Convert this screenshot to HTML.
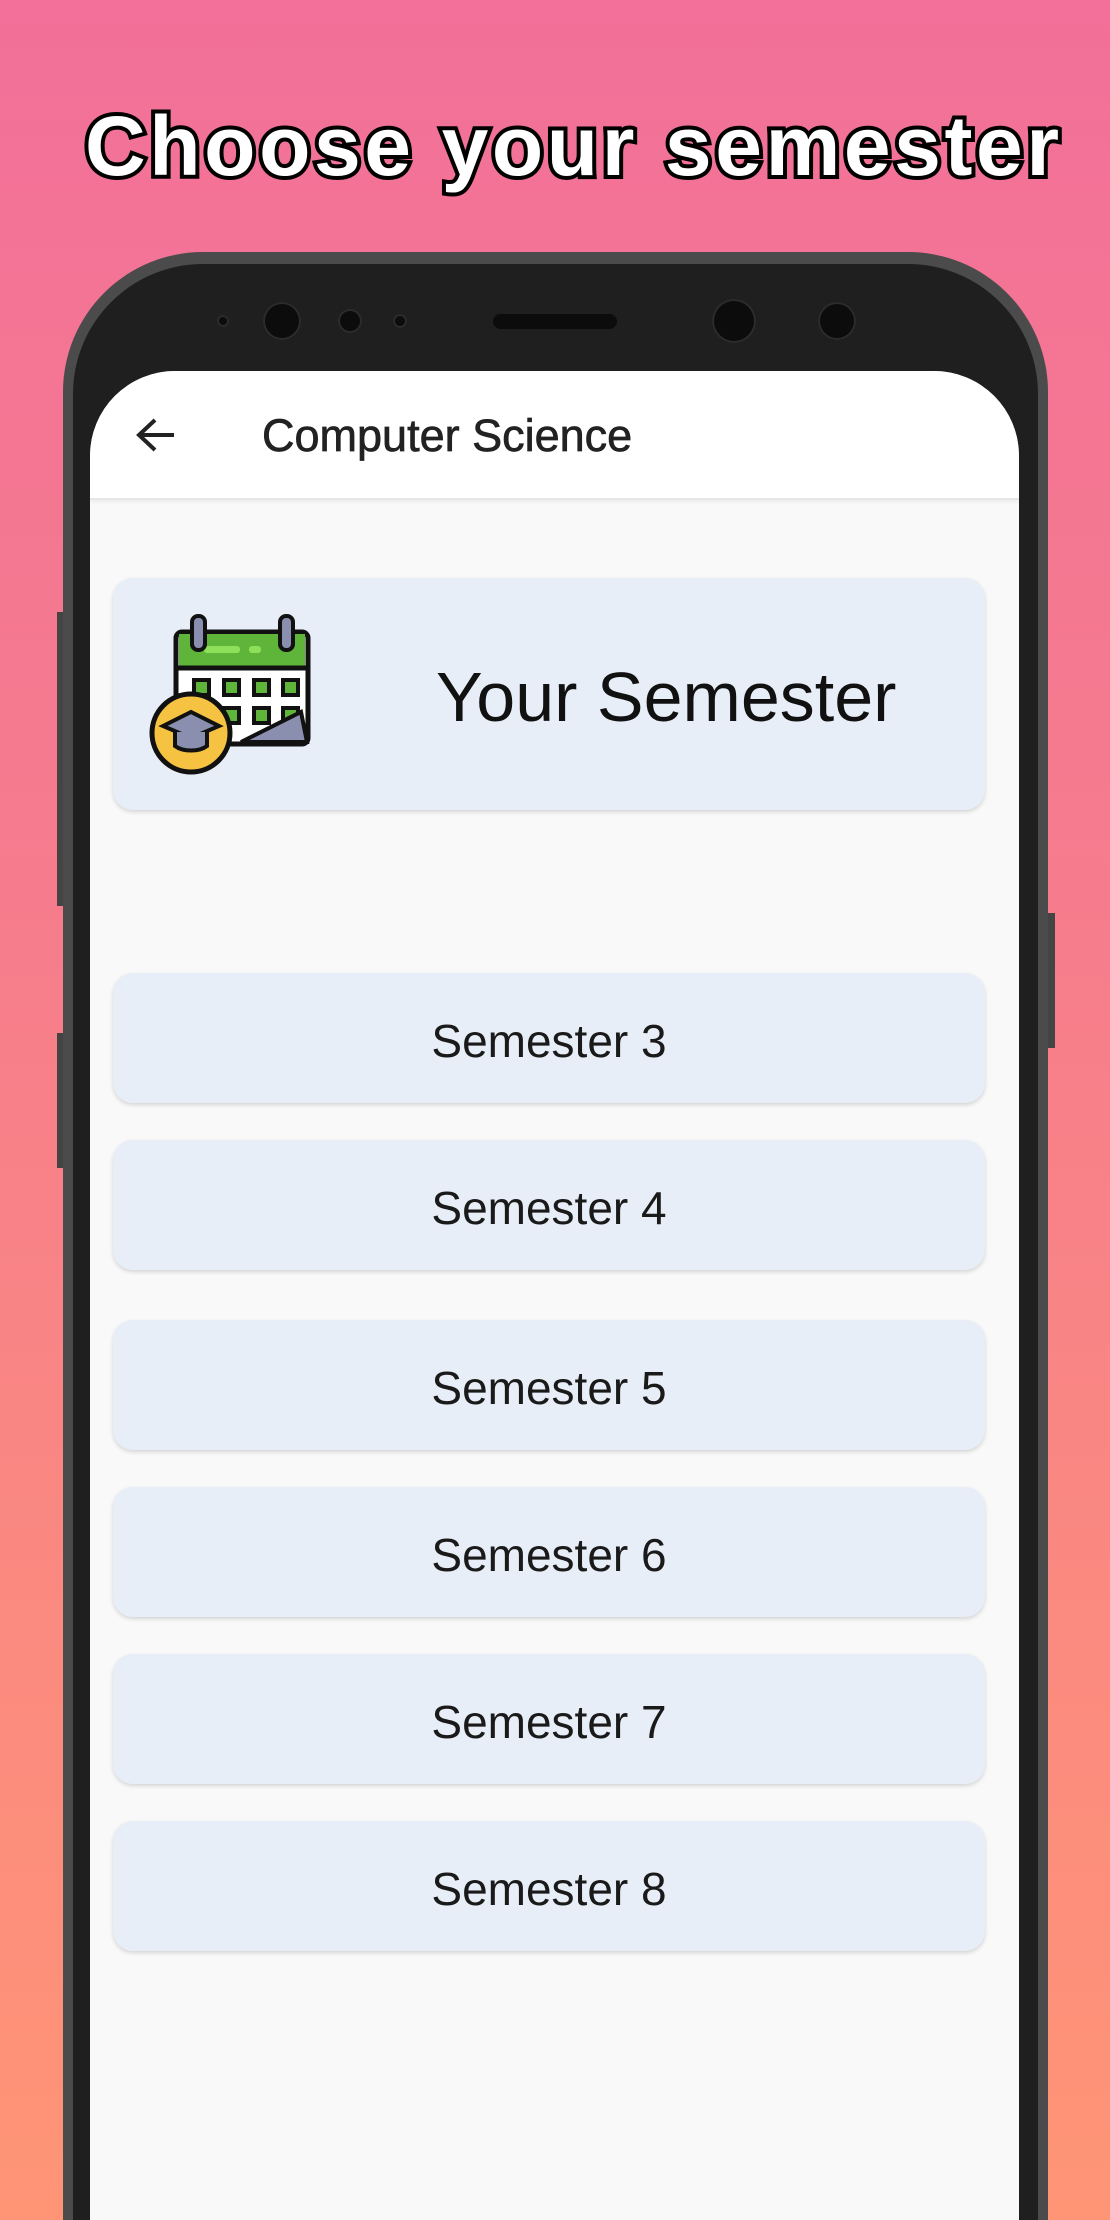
<!DOCTYPE html>
<html><head><meta charset="utf-8"><style>
*{margin:0;padding:0;box-sizing:border-box}
html,body{width:1110px;height:2220px;overflow:hidden}
body{background:linear-gradient(180deg,#f27099 0%,#f67c8d 40%,#ff9575 100%);position:relative;font-family:"Liberation Sans",sans-serif}
.title{position:absolute;left:85px;top:104px;font-size:84px;font-weight:bold;color:#fff;-webkit-text-stroke:8px #000;paint-order:stroke fill;letter-spacing:3.6px;white-space:nowrap;line-height:1}
.phone{position:absolute;left:63px;top:252px;width:985px;height:1968px;background:#4b4b4b;border-radius:140px 140px 0 0}
.bezel{position:absolute;left:10px;top:12px;right:10px;bottom:0;background:#1f1f1f;border-radius:130px 130px 0 0}
.sb{position:absolute;background:#444}
.screen{position:absolute;left:90px;top:371px;width:929px;height:1849px;background:#f9f9f9;border-radius:85px 85px 0 0;overflow:hidden}
.appbar{height:129px;background:#fff;border-bottom:2px solid #e6e6e6;box-shadow:0 2px 4px rgba(0,0,0,.06);position:relative}
.appbar .t{position:absolute;left:172px;top:39px;font-size:45px;color:#222;-webkit-text-stroke:0.7px #222}
.card{position:absolute;left:23px;width:872px;background:#e8eef7;border-radius:20px;box-shadow:0 2px 4px rgba(0,0,0,.15)}
.btn{height:130px;display:flex;align-items:center;justify-content:center;font-size:46px;color:#1a1a1a;padding-top:6px}
.dot{position:absolute;border-radius:50%;background:#0c0c0c;box-shadow:inset 0 0 0 2px #2c2c2c}
</style></head><body>
<div class="title">Choose your semester</div>
<div class="sb" style="left:57px;top:612px;width:7px;height:294px"></div>
<div class="sb" style="left:57px;top:1033px;width:7px;height:135px"></div>
<div class="sb" style="left:1047px;top:913px;width:8px;height:135px"></div>
<div class="phone"><div class="bezel"></div></div>
<div class="dot" style="left:217px;top:315px;width:12px;height:12px"></div>
<div class="dot" style="left:263px;top:302px;width:38px;height:38px"></div>
<div class="dot" style="left:338px;top:309px;width:24px;height:24px"></div>
<div class="dot" style="left:393px;top:314px;width:14px;height:14px"></div>
<div style="position:absolute;left:493px;top:314px;width:124px;height:15px;border-radius:8px;background:#0c0c0c"></div>
<div class="dot" style="left:712px;top:299px;width:44px;height:44px"></div>
<div class="dot" style="left:818px;top:302px;width:38px;height:38px"></div>
<div class="screen">
 <div class="appbar">
  <svg style="position:absolute;left:44px;top:44px" width="44" height="40" viewBox="0 0 44 40"><path d="M40 20H6M21 5L5 20l16 15" fill="none" stroke="#222" stroke-width="4"/></svg>
  <div class="t">Computer Science</div>
 </div>
 <div class="card" style="top:207px;height:232px">
  <svg style="position:absolute;left:36px;top:36px" width="166" height="162" viewBox="0 0 166 162">
   <rect x="27" y="18" width="132" height="112" rx="6" fill="#fff" stroke="#111" stroke-width="5"/>
   <path d="M30 20h126v34H30z" fill="#5fb43a"/>
   <rect x="55" y="32" width="36" height="7" rx="3" fill="#8ee05a"/><rect x="100" y="32" width="12" height="7" rx="3" fill="#8ee05a"/>
   <path d="M29 54h128" stroke="#111" stroke-width="5"/>
   <rect x="43" y="2" width="13" height="34" rx="6" fill="#8a8fb0" stroke="#111" stroke-width="4"/>
   <rect x="131" y="2" width="13" height="34" rx="6" fill="#8a8fb0" stroke="#111" stroke-width="4"/>
   <g fill="#5fb43a" stroke="#111" stroke-width="4"><rect x="45" y="66" width="15" height="15"/><rect x="75" y="66" width="15" height="15"/><rect x="105" y="66" width="15" height="15"/><rect x="134" y="66" width="15" height="15"/><rect x="75" y="94" width="15" height="15"/><rect x="105" y="94" width="15" height="15"/><rect x="134" y="94" width="15" height="15"/></g>
   <path d="M92 128l60-30 6 30z" fill="#8a8fb0" stroke="#111" stroke-width="4"/>
   <circle cx="42" cy="119" r="39" fill="#f5c242" stroke="#111" stroke-width="5"/>
   <path d="M14 112l28-14 28 14-28 12z" fill="#8a8fb0" stroke="#111" stroke-width="4"/>
   <path d="M26 118v14c8 6 24 6 32 0v-14" fill="#8a8fb0" stroke="#111" stroke-width="4"/>
  </svg>
  <div style="position:absolute;left:323px;top:84px;font-size:70px;color:#111;line-height:1">Your Semester</div>
 </div>
 <div class="card btn" style="top:602px">Semester 3</div>
 <div class="card btn" style="top:769px">Semester 4</div>
 <div class="card btn" style="top:949px">Semester 5</div>
 <div class="card btn" style="top:1116px">Semester 6</div>
 <div class="card btn" style="top:1283px">Semester 7</div>
 <div class="card btn" style="top:1450px">Semester 8</div>
</div>
</body></html>
